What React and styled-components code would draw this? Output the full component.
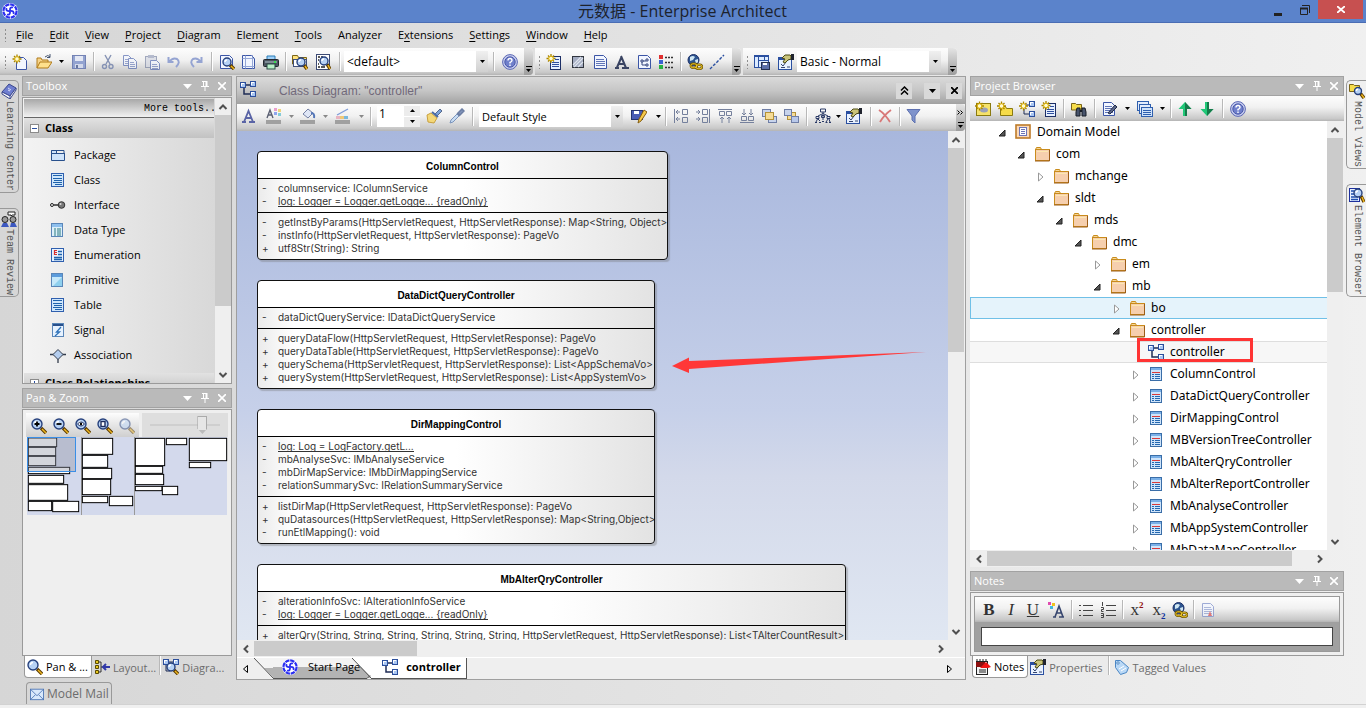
import React, { useState } from 'react';
import styled, { createGlobalStyle, css } from 'styled-components';

const ui = "'Open Sans', 'Noto Sans', 'Noto Sans CJK SC', sans-serif";
const wide = "'Noto Sans', 'Open Sans', 'Noto Sans CJK SC', sans-serif";
const mono = "'Liberation Mono', monospace";

const GlobalStyle = createGlobalStyle`
  * { box-sizing: border-box; }
  body { margin: 0; overflow: hidden; font-family: ${ui}; font-size: 11px; color: #000; }
  button, input, select, textarea { font: inherit; color: inherit; border: 0; padding: 0; margin: 0; background: none; border-radius: 0; }
  ul { list-style: none; margin: 0; padding: 0; }
  svg { display: block; flex: none; }
  h1, h2, p { margin: 0; font-weight: normal; }
`;

// shared bits of the drawings
const Box = ({ x, y }) => (
  <g>
    <rect x={x + 0.5} y={y + 0.5} width="5" height="5" fill="#a9c6f2" stroke="#2c4f9c" />
    <path d={`M${x + 1} ${y + 1}h3v1h-2v2h-1z`} fill="#fff" />
  </g>
);
const Lens = ({ x = 6, y = 6, r = 5, pale }) => (
  <g opacity={pale ? 0.5 : 1}>
    <path d={`M${x + r - 1} ${y + r - 1}L15 15`} stroke="#5b3b00" strokeWidth="3.4" />
    <path d={`M${x + r} ${y + r}L15 15`} stroke="#f0b820" strokeWidth="1.4" />
    <circle cx={x} cy={y} r={r} fill="#b7d2f5" stroke="#26407c" strokeWidth="1.4" />
    <path d={`M${x - r / 2} ${y}a${r / 2} ${r / 2} 0 0 1 ${r / 2} ${-r / 2}`} stroke="#fff" fill="none" strokeWidth="1.3" />
  </g>
);
const Spark = ({ x = 4.5, y = 4.5 }) => (
  <g>
    <path d={`M${x} ${y - 4.5}v9M${x - 4.5} ${y}h9M${x - 3} ${y - 3}l6 6M${x + 3} ${y - 3}l-6 6`} stroke="#a88400" strokeWidth="1.3" />
    <circle cx={x} cy={y} r="2.3" fill="#fffbd0" stroke="#dcb000" />
  </g>
);
const Sheet = ({ x = 2, y = 1, w = 11, h = 14, c = '#3c56a6', lines = true }) => (
  <g>
    <path d={`M${x + 0.5} ${y + 0.5}h${w - 4}l3 3v${h - 4}h-${w - 1}z`} fill="#f2f6ff" stroke={c} />
    {lines && <path d={`M${x + 2} ${y + 4.5}h${w - 5}M${x + 2} ${y + 6.5}h${w - 4}M${x + 2} ${y + 8.5}h${w - 4}M${x + 2} ${y + 10.5}h${w - 4}`} stroke={c} opacity=".8" />}
  </g>
);
const Swatch = () => (
  <g>
    <rect x="8" y="0" width="3" height="3" fill="#e9a0cc" />
    <rect x="12" y="1" width="3" height="3" fill="#ecd47c" />
    <rect x="8" y="4" width="3" height="3" fill="#8fa6ee" />
    <rect x="12" y="5" width="3" height="3" fill="#86ccd8" />
  </g>
);
const Globe = () => (
  <g>
    <circle cx="6.5" cy="6" r="5.5" fill="#2d5590" stroke="#1d2f66" />
    <path d="M3 3q3-2 5 0l-2 3-3 1zM8 6l3-1v3l-2 2z" fill="#cfe6f2" />
    <rect x="3.8" y="9.8" width="6" height="4" rx="2" fill="none" stroke="#6b5200" strokeWidth="2.4" />
    <rect x="9" y="10.8" width="6" height="4" rx="2" fill="none" stroke="#6b5200" strokeWidth="2.4" />
    <rect x="3.8" y="9.8" width="6" height="4" rx="2" fill="none" stroke="#f2cc2c" />
    <rect x="9" y="10.8" width="6" height="4" rx="2" fill="none" stroke="#f2cc2c" />
  </g>
);
const Hand = () => (
  <g>
    <rect x=".5" y="3.5" width="13" height="12" fill="#e9f2ff" stroke="#2a4fa0" />
    <path d="M1 5h12" stroke="#2a4fa0" strokeWidth="2" />
    <path d="M3 10l2 2 3-4M9 13h3M3 13.500h4" stroke="#34446e" fill="none" />
    <path d="M4 4l3-3h5l1 1v3l-3 1-3 3-2-1 2-3z" fill="#c9c47a" stroke="#4d4a14" />
    <path d="M13 0h3v6h-3z" fill="#20242e" />
  </g>
);
const Notepad = ({ c = '#2f5fae', red }) => (
  <g>
    <rect x="2.5" y="1.5" width="11" height="13" fill="#cfe4fa" stroke={c} />
    <path d="M3 3h10" stroke="#7ab0e8" strokeWidth="2" />
    <path d="M4 6.500h8" stroke={red ? '#d83a3a' : '#2468b0'} />
    <path d="M4 8.500h2M7 8.500h5M4 10.500h2M7 10.500h5M4 12.500h2M7 12.500h5" stroke="#2468b0" />
  </g>
);

const icons = {
  logo: (
    <g>
      <circle cx="8" cy="8" r="8" fill="#fff" />
      <circle cx="8" cy="8" r="6.600" fill="none" stroke="#2a2ef0" strokeWidth="2.200" strokeDasharray="4.400 .780" />
      <path d="M8 8Q7.500 3.500 11 4.500M8 8Q12.500 7.500 11.500 11M8 8Q8.500 12.500 5 11.500M8 8Q3.500 8.500 4.500 5" fill="none" stroke="#2a2ef0" strokeWidth="1.800" />
    </g>
  ),
  new: <g><Sheet x={4} y={3} w={11} h={13} lines={false} /><Spark x={5} y={5} /></g>,
  open: (
    <g>
      <path d="M1 14V4h4l1 2h6v2" fill="#f7d48a" stroke="#b07a18" />
      <path d="M1 14l3-6h12l-4 6z" fill="#ffe08c" stroke="#b07a18" />
      <path d="M9 3q3-3 5 0M14 0v3.500h-3" fill="none" stroke="#42526e" />
    </g>
  ),
  save: (
    <g>
      <rect x="1.5" y="1.5" width="13" height="13" fill="#93a3d0" stroke="#7382b4" />
      <rect x="4" y="2" width="8" height="5" fill="#e4e8f4" /><rect x="4" y="10" width="8" height="4" fill="#d2d8ea" />
      <rect x="5" y="11" width="2" height="3" fill="#66769f" />
    </g>
  ),
  cut: (
    <g stroke="#8592b4" fill="none" strokeWidth="1.4">
      <path d="M5 1l5 9M11 1l-5 9" /><circle cx="4.500" cy="12.500" r="2" /><circle cx="11" cy="12.500" r="2" />
    </g>
  ),
  copy: <g opacity=".6"><Sheet x={1} y={1} w={9} h={11} /><Sheet x={6} y={4} w={9} h={11} /></g>,
  paste: (
    <g opacity=".6">
      <rect x="1.5" y="2.5" width="11" height="11" fill="#d0d4e0" stroke="#6a7698" /><rect x="4" y="1" width="6" height="3" fill="#8b95b4" />
      <Sheet x={6} y={6} w={10} h={10} />
    </g>
  ),
  undo: <path d="M2.500 3v5h5M3 8q4-5 8-3q4 3-1 8" fill="none" stroke="#95a4d2" strokeWidth="2" />,
  redo: <path d="M13.500 3v5h-5M13 8q-4-5-8-3q-4 3 1 8" fill="none" stroke="#95a4d2" strokeWidth="2" />,
  preview: <g><Sheet lines={false} x={1} w={13} /><Lens x={8} y={8} r={4} /></g>,
  page: <g><Sheet lines={false} x={1} w={13} /><path d="M4.500 1v14M11.500 1v14M1 4.500h13M1 12.500h13" stroke="#6f86c6" opacity=".7" /></g>,
  print: (
    <g>
      <path d="M4 6V2h8v4" fill="#9fd0f8" stroke="#2b7db6" />
      <rect x=".5" y="5.500" width="15" height="7" rx="1" fill="#4c5560" stroke="#23282e" /><path d="M2 8h12" stroke="#8fa0a8" strokeWidth="1.500" /><path d="M11 8h2" stroke="#38e050" strokeWidth="2" />
      <rect x="4" y="10" width="8" height="5" fill="#b8f0c8" stroke="#2b4d46" />
    </g>
  ),
  findPkg: <g><path d="M.5 10V1.500h5l1 2h8V10z" fill="#ffe27a" stroke="#7a6418" /><rect x="1.500" y="5.500" width="13" height="7" fill="#fff" stroke="#41507a" /><Lens x={9} y={8} r={4} /></g>,
  findDoc: <g><rect x="1.500" y=".5" width="13" height="15" fill="#fff" stroke="#3c4a74" /><path d="M3 3h2M6 3h2M3 6h1M3 10h1M3 13h2M6 13h4" stroke="#222" strokeWidth="1.500" /><Lens x={9} y={7} r={4} /></g>,
  help: (
    <g>
      <circle cx="8" cy="8" r="7.400" fill="#c6cdf0" stroke="#5c68b4" /><circle cx="8" cy="8" r="5.200" fill="#7080cc" stroke="#4a58a8" />
      <path d="M6 6.500q0-2 2-2t2 2q0 1-2 2v1M8 10.500v1.500" fill="none" stroke="#fff" strokeWidth="1.400" />
    </g>
  ),
  newEl: <g><rect x="4.500" y="2.500" width="10" height="13" fill="#e6f0ff" stroke="#1d2f66" /><path d="M9 5.500h4M6 8.500h7M6 10.500h7M6 12.500h7" stroke="#2f4f9e" strokeWidth="1.200" /><Spark x={5} y={4.500} /></g>,
  shade: <g><rect x="2.500" y="2.500" width="11" height="11" fill="#a3abc0" stroke="#31363f" /><path d="M3 11l8-8M4 13l9-9M8 13l5-5" stroke="#dfe5ee" strokeWidth="1.200" /></g>,
  doc: <Sheet x={2} w={13} />,
  letter: <path d="M1 14h4M8 14h7M3 13.500L7.500 3 M7 2l5 12M5 10h5" fill="none" stroke="#3a4462" strokeWidth="2" />,
  docNodes: <g><Sheet x={2} w={13} lines={false} /><path d="M5 6h2v2h-2zM10 5h2v2h-2zM10 10h2v2h-2zM7 7h3M6 8v3h4" fill="none" stroke="#3a4a80" /></g>,
  legend: (
    <g>
      <path d="M7 3.500h8M7 8.500h8M7 13.500h8" stroke="#333" strokeDasharray="2 1" strokeWidth="1.500" />
      <rect x="1" y="1" width="4" height="4" fill="#e03030" /><rect x="1" y="6" width="4" height="4" fill="#3a62d0" /><rect x="1" y="11" width="4" height="4" fill="#28b040" />
    </g>
  ),
  globe: <Globe />,
  dash: <path d="M1 15L15 1" stroke="#2a4fa0" strokeDasharray="3 1.500" strokeWidth="1.400" />,
  layoutSave: (
    <g>
      <rect x=".5" y="1.500" width="14" height="12" fill="#dcebff" stroke="#2a4fa0" /><path d="M0 2.500h15M4.500 3v10M10.500 3v4M4 6.500h11" stroke="#2a4fa0" />
      <rect x="7.500" y="8.500" width="8" height="7" fill="#5c70a8" stroke="#25304e" /><rect x="9" y="9" width="4" height="2" fill="#fff" />
    </g>
  ),
  props: <Hand />,
  nodes: <g><path d="M6 4h5M4 6v7h6" stroke="#1f2c55" strokeWidth="1.500" fill="none" /><Box x={0} y={1} /><Box x={10} y={0} /><Box x={10} y={10} /></g>,
  fontA: <path d="M1 14h4M8 14h6M3 14L7.500 3l4.500 11M4.500 10h6" fill="none" stroke="#5a64a6" strokeWidth="1.800" />,
  fontColor: <g><path d="M1 10l3-8 3 8M2 7h4" fill="none" stroke="#5a5f72" strokeWidth="1.400" /><Swatch /><rect x="0" y="12" width="15" height="4" fill="#a0a0a0" /></g>,
  fill: <g><path d="M3 6l5-5 5 4-5 5z" fill="#dfe6f6" stroke="#7480a4" /><path d="M11 5q4 0 3 5" fill="none" stroke="#5577b8" strokeWidth="2" /><rect x="0" y="12" width="15" height="4" fill="#a0a0a0" /></g>,
  lineColor: <g><path d="M2 7L13 1" stroke="#7f9cd8" strokeWidth="1.400" /><rect x="1" y="8" width="4" height="3" fill="#e8b4c0" /><rect x="5" y="8" width="4" height="3" fill="#f0c878" /><rect x="9" y="8" width="4" height="3" fill="#7ab8dc" /><rect x="0" y="12" width="15" height="4" fill="#a0a0a0" /></g>,
  brush: <g><path d="M9 6l5-5 2 2-5 5z" fill="#7ba2d8" stroke="#55688c" /><path d="M1 7l4-2 6 5-3 5-6-1z" fill="#f4d878" stroke="#c8a040" /><path d="M6 4l6 5" stroke="#4b6ca6" strokeWidth="2" /></g>,
  dropper: <g><path d="M1 15l1-3 6-6 2 2-6 6z" fill="#c8dcf2" stroke="#7a94bc" /><path d="M8 5l3 3M9 5l4-4 2 2-4 4z" fill="#8194ba" stroke="#6b7da2" strokeWidth="1.500" /></g>,
  savePen: <g><rect x=".5" y="2.500" width="11" height="9" fill="#4a5cb4" stroke="#27346e" /><rect x="3" y="3" width="5" height="3" fill="#fff" /><path d="M7 15l1-4 5-9 3 2-6 9z" fill="#f6c94a" stroke="#855d10" /></g>,
  alignL: <path d="M1.500 1v14M3 4h4M3 11h4M5 2l-2 2 2 2M5 9l-2 2 2 2M9.500 1.500h5v5h-5zM9.500 9.500h5v5h-5z" fill="none" stroke="#75809c" />,
  alignR: <path d="M14.500 1v14M1 4h4M1 11h4M3 2l2 2-2 2M3 9l2 2-2 2M7.500 1.500h5v5h-5zM7.500 9.500h5v5h-5z" fill="none" stroke="#75809c" />,
  alignT: <path d="M1 1.500h14M2.500 3.500h5v4h-5zM9.500 3.500h5v4h-5zM5 15V9M12 15V9M3 11l2-2 2 2M10 11l2-2 2 2" fill="none" stroke="#75809c" />,
  alignB: <path d="M1 14.500h14M2.500 8.500h5v4h-5zM9.500 8.500h5v4h-5zM5 1v6M12 1v6M3 5l2 2 2-2M10 5l2 2 2-2" fill="none" stroke="#75809c" />,
  front: <g><rect x="1.500" y="1.500" width="8" height="7" fill="#c8d4ec" stroke="#6f7ea6" /><rect x="7.500" y="8.500" width="8" height="6" fill="#c8d4ec" stroke="#6f7ea6" /><rect x="4.500" y="4.500" width="8" height="7" fill="#f6dc96" stroke="#b49238" /></g>,
  back: <g><rect x="4.500" y="4.500" width="8" height="7" fill="#f6dc96" stroke="#b49238" /><rect x="1.500" y="1.500" width="7" height="6" fill="#c8d4ec" stroke="#6f7ea6" /><rect x="8.500" y="8.500" width="7" height="6" fill="#b8c8ea" stroke="#6f7ea6" /></g>,
  tree: <path d="M5.500 1h5v3h-5zM8 4v8M8 5.500L3 8M8 5.500L13 8M1 8.500h3v2h-3zM6.500 7.500h3v2h-3zM12 8.500h3v2h-3zM2.500 11L1 14M3 11l2 2M13 11l-2 3M14 11l1 3M0 14.500h2M4 14.500h2M7 13.500h2M10.500 14.500h2M14 14.500h2" fill="none" stroke="#2b3a66" />,
  del: <path d="M2 2q6 4 11 12M14 2q-7 5-11 12" fill="none" stroke="#d87878" strokeWidth="1.800" />,
  filter: <path d="M1 1.500h13L9 8v7l-3-3V8z" fill="#7f93cc" stroke="#5d70b0" />,
  package: <g><path d="M1.500 13.500v-10h5v3h8v7z" fill="#cfe4fb" stroke="#28508c" /><path d="M1 6.500h14M1.500 3.500h12.500v3" fill="none" stroke="#28508c" /></g>,
  klass: <g><rect x="1.500" y="1.500" width="12" height="13" fill="#cfe6fb" stroke="#2f5fae" /><path d="M3 3.500h9M3 6.500h9M4 8.500h8M3 10.500h9M5 12.500h7" stroke="#1f62ac" /></g>,
  iface: <g><circle cx="2" cy="8" r="1.500" fill="none" stroke="#222" /><path d="M4 8h5" stroke="#222" strokeWidth="1.400" /><circle cx="11.500" cy="8" r="3.300" fill="#777" stroke="#333" /><circle cx="10.500" cy="7" r="1" fill="#ddd" /></g>,
  dataType: <g><rect x="1.500" y="1.500" width="11" height="13" fill="#ddf0fa" stroke="#5a86b8" /><rect x="2" y="2" width="10" height="3" fill="#8ec0ee" /><path d="M4 7h2M7 7h4M4 9h2M7 9h4M4 11h2M7 11h4M4 13h2M7 13h4" stroke="#2a7a80" /></g>,
  enumr: <g><rect x="1.500" y="1.500" width="12" height="13" fill="#e6f2ff" stroke="#2f5fae" /><path d="M4 3.500h3M4 5.500h3M4 7.500h3M4.500 3v5" stroke="#d83030" strokeWidth="1.200" /><path d="M8 4.500h4M8 7.500h4M4 10.500h8M4 12.500h8" stroke="#1f62ac" strokeWidth="1.300" /></g>,
  primitive: <g><rect x="1.500" y="1.500" width="11" height="13" fill="#c5e8fa" stroke="#5a86b8" /><rect x="2" y="2" width="10" height="3" fill="#5c9cdc" /><path d="M3 14l9-9v9z" fill="#8fd0ee" /></g>,
  signal: <g><rect x="2.500" y="1.500" width="11" height="13" fill="#e6f2ff" stroke="#5a86b8" /><rect x="3" y="2" width="10" height="2" fill="#28508c" /><path d="M11 5L6.500 10h3L5 14" fill="none" stroke="#2f72b8" strokeWidth="1.300" /></g>,
  assoc: <g><path d="M0 7.500h16M8 12v4" stroke="#333c4c" strokeWidth="1.300" /><path d="M8 2.500l5 5-5 5-5-5z" fill="#b4cdee" stroke="#333c4c" /></g>,
  zoomIn: <g><Lens /><path d="M3.500 6h5M6 3.500v5" stroke="#000" strokeWidth="1.800" /></g>,
  zoomOut: <g><Lens /><path d="M3.500 6h5" stroke="#000" strokeWidth="1.800" /></g>,
  zoomFit: <g><Lens /><path d="M2.500 6q3.500-4 7 0q-3.500 4-7 0z" fill="#fff" stroke="#1c2c5c" /><circle cx="6" cy="6" r="1.200" fill="#000" /></g>,
  zoomPage: <g><Lens /><rect x="4" y="3.500" width="4" height="5" fill="#fff" stroke="#1c2c5c" strokeWidth="1.400" /></g>,
  zoomOff: <Lens pale />,
  lens: <Lens />,
  layout: <g><path d="M5 3h2v10H5M7 8h2" stroke="#333" fill="none" /><path d="M1.500 1.500h3v3h-3zM1.500 6.500h3v3h-3zM1.500 11.500h3v3h-3z" fill="#e8c820" stroke="#5b4b00" /><path d="M16 8H9M12 5L9 8l3 3" fill="none" stroke="#3038a8" strokeWidth="2" /></g>,
  diagLens: <g><Box x={0} y={0} /><Box x={10} y={0} /><path d="M6 3h4M3 6v6h4" stroke="#1f2c55" fill="none" /><Lens x={8} y={8} r={4} /></g>,
  mail: <g><rect x=".5" y="2.500" width="15" height="12" fill="#d8e8fb" stroke="#4a74b4" /><path d="M1 3l7 7 7-7M1 14l5-5M15 14l-5-5" fill="none" stroke="#4a74b4" /></g>,
  newModel: <g><rect x="1.500" y="2.500" width="14" height="12" fill="#f6e26a" stroke="#8a7a10" /><ellipse cx="9" cy="9" rx="4" ry="2.500" fill="#9aa0b8" /><Spark x={4.500} y={5} /></g>,
  newPkg: <g><path d="M3.500 14.500v-9h5l1 2h6v7z" fill="#f6dc4a" stroke="#8a7a10" /><Spark x={4.500} y={5} /></g>,
  newDiag: <g><path d="M7 4h4M5 8v5h6" stroke="#1f2c55" fill="none" /><Box x={10} y={0} /><Box x={10} y={10} /><Spark x={4.500} y={5} /></g>,
  find: <g><path d="M.5 9V2.500h4l1 1h5V9z" fill="#f6dc4a" stroke="#7a6418" /><path d="M5 15v-4l1-4h3v8zM11 15V7h3l1 4v4z" fill="#48546c" stroke="#171c26" /><path d="M9 10h2" stroke="#171c26" strokeWidth="2" /></g>,
  edit: <g><Sheet x={1} w={12} /><path d="M6 12l7-8 2 2-7 7z" fill="#59658c" stroke="#222b44" /></g>,
  stack: <g><rect x=".5" y=".5" width="11" height="9" fill="#e2ecfc" stroke="#2f5fae" /><rect x="2.500" y="3.500" width="11" height="9" fill="#e2ecfc" stroke="#2f5fae" /><rect x="4.500" y="6.500" width="11" height="9" fill="#cfe2fa" stroke="#2f5fae" /><path d="M6 9.500h8M6 11.500h8M6 13.500h8" stroke="#2f5fae" /></g>,
  up: <g><path d="M8 1L1.500 8H6v7h4V8h4.500z" fill="#20c878" /><path d="M8 1l6.500 7H10v7H8z" fill="#167a4a" /></g>,
  down: <g><path d="M8 15L1.500 8H6V1h4v7h4.500z" fill="#20c878" /><path d="M8 15l6.500-7H10V1H8z" fill="#167a4a" /></g>,
  folder: <g><path d="M1.500 13.500v-10l1-2h4l1 2" fill="#f6d698" stroke="#c98c1c" /><rect x="1.500" y="3.500" width="14" height="11" fill="#f6cfae" stroke="#c98c1c" /><path d="M1 15h14.500V4" fill="none" stroke="#9c5c18" /><path d="M3 5.500h11" stroke="#fde8b0" /></g>,
  model: <g><rect x="1" y="1" width="14" height="13" fill="#fbd9b8" stroke="#bd7a28" strokeWidth="1.600" /><rect x="4.500" y="3.500" width="7" height="8" fill="#fff" stroke="#6d74b4" /><path d="M6 5.500h4M6 7.500h4M6 9.500h4" stroke="#6d74b4" /></g>,
  clsRed: <Notepad c="#3a6ea8" red />,
  noteTab: <g><rect x="1.500" y="2.500" width="11" height="13" fill="#f2f2f2" stroke="#222" /><path d="M2 2v-2M5 2v-2M8 2v-2M11 2v-2M4 11h7M4 13h7" stroke="#222" /><path d="M1 3h9v5H1z" fill="#8e1010" /><path d="M5 9l6-6 5 5-3 1z" fill="#f01414" /></g>,
  tag: <g><path d="M1.500 1.500h5l8 7-2 5-6 2-5-7z" fill="#b9d8f6" stroke="#4a86c4" /><circle cx="4" cy="4" r="1.200" fill="#fff" stroke="#4a86c4" /><path d="M5 10l5-3M7 12l5-3" stroke="#fff" /></g>,
  book: <g><path d="M1 9L8 1l7 4-6 8z" fill="#6f7ed0" stroke="#3a478e" /><path d="M1 9l8 4v3L1 11zM9 13l6-8v2l-6 9" fill="#fff" stroke="#3a478e" /><path d="M7 5l3 2M7 7l2 1" stroke="#d8def8" /></g>,
  team: <g><circle cx="4" cy="8.500" r="3" fill="#999" stroke="#222" /><circle cx="12" cy="8.500" r="3" fill="#999" stroke="#222" /><path d="M0 16l2-4h4l2 4zM9 16l1-4h4l2 4z" fill="#3c58c0" /><path d="M7 1h7v3h-3l-1 1V4H7z" fill="#fff" stroke="#222" /></g>,
  views: <g><path d="M.5 8.500v-7h4l1 1h5v6z" fill="#f6dc4a" stroke="#7a6418" /><Lens x={9} y={8} r={3.500} /></g>,
  elBrowser: <g><rect x=".5" y="1.500" width="10" height="13" fill="#e6f0ff" stroke="#1d2f9c" /><path d="M2 4h3M2 7h3M2 10h7M2 12.500h7" stroke="#1f4fae" strokeWidth="1.400" /><Lens x={9} y={6} r={4} /></g>,
  bullets: <path d="M1 3.500h2M1 8.500h2M1 13.500h2M5 3.500h10M5 8.500h10M5 13.500h10" stroke="#444" strokeWidth="1.200" />,
  numbers: <path d="M2.500 0v4M1 5.500h2.500v2h-2v2h2M1 11.500h2.500v4h-2.500M1 13.500h2M6 3.500h10M6 8.500h10M6 13.500h10" stroke="#444" fill="none" />,
  linkColor: <g><rect x="0" y="0" width="3" height="3" fill="#e04bb0" /><rect x="4" y="1" width="3" height="3" fill="#f2c21e" /><rect x="2" y="4" width="3" height="3" fill="#42b8dc" /><path d="M5 15h3M11 15h5M7 15l4-11 4 11M8 11h5" fill="none" stroke="#36456e" strokeWidth="1.600" /></g>,
  docRed: <g opacity=".7"><Sheet x={2} w={12} c="#7a8cc8" /><path d="M8 14l2-5 2 5z" fill="#e05050" /></g>,
};

const Icon = ({ name, size = 16 }) => <svg width={size} height={size} viewBox="0 0 16 16" aria-hidden="true">{icons[name]}</svg>;
const Caret = ({ c = '#000', small }) => <svg width={small ? 5 : 7} height={small ? 3 : 4} viewBox="0 0 7 4"><path d="M0 0h7L3.500 4z" fill={c} /></svg>;
const Chevron = ({ turn = 0 }) => (
  <svg width="10" height="10" viewBox="0 0 10 10"><path d="M1.500 7L5 3.500 8.500 7" transform={`rotate(${turn} 5 5)`} fill="none" stroke="#505050" strokeWidth="2" /></svg>
);

const App_ = styled.div`
  height: 100vh;
  display: flex;
  flex-direction: column;
  background: linear-gradient(to right, #d6d6d6, #f0f0f0);
`;
const TitleBar = styled.header`
  height: 23px;
  flex: none;
  display: grid;
  grid-template-columns: 1fr auto 1fr;
  background: #5b83cb;
  border-bottom: 1px solid #4a6db4;
  padding: 0 3px 0 2px;
  h1 { font-size: 16px; line-height: 22px; color: #1c222c; }
`;
const AppMark = styled.div`padding-top: 3px;`;
const WindowButtons = styled.div`
  display: flex;
  justify-content: flex-end;
`;
const WinButton = styled.button`
  width: ${p => (p.$close ? 45 : 27)}px;
  height: 19px;
  display: grid;
  place-items: center;
  background: ${p => (p.$close ? '#c75050' : 'transparent')};
`;
const Grip = styled.span`
  width: 3px;
  height: 14px;
  flex: none;
  background: radial-gradient(circle, #8e8e8e 1px, transparent 1px) 0 0 / 3px 4px;
`;
const MenuBar = styled.nav`
  height: 25px;
  flex: none;
  display: flex;
  align-items: center;
  gap: 2px;
  padding: 0 0 2px 4px;
  button { padding: 0 7px; line-height: 20px; }
  u { text-underline-offset: 2px; }
`;
const Toolbars = styled.div`
  display: flex;
  gap: 2px;
  height: 28px;
  flex: none;
`;
const silver = 'linear-gradient(#fdfdfd, #f1f1f1 45%, #c9c9c9 90%, #b4b4b4)';
const ToolBar = styled.div`
  display: flex;
  align-items: center;
  height: 27px;
  flex: none;
  padding-left: ${p => p.$pad || 0}px;
  background: ${silver};
  border-radius: 0 4px 4px 0;
`;
const DiagramTools = styled(ToolBar)`
  > *:not(:last-child) { margin-bottom: 3px; }
`;
const ToolButton = styled.button`
  width: ${p => p.$w || 22}px;
  height: 22px;
  flex: none;
  display: grid;
  place-items: center;
`;
const Sep = styled.span`
  width: 1px;
  height: 19px;
  flex: none;
  margin: 0 ${p => p.$m || 3}px;
  background: #b8b8b8;
  box-shadow: 1px 0 #fff;
`;
const Overflow = styled.button`
  align-self: stretch;
  width: 9px;
  flex: none;
  margin-left: ${p => (p.$gap ? `${p.$gap}px` : 'auto')};
  display: flex;
  flex-direction: column;
  align-items: center;
  justify-content: flex-end;
  gap: 2px;
  padding-bottom: 3px;
  background: linear-gradient(#e4e4e4, #9d9d9d);
  border-radius: 0 4px 4px 0;
  svg:first-child:not(:last-child) { margin-bottom: 5px; }
  i { width: 6px; height: 1px; background: #000; }
`;
const PickWrap = styled.span`
  position: relative;
  display: inline-flex;
  flex: none;
  width: 144px;
  height: 21px;
  background: #fff;
  select { appearance: none; width: 100%; padding-left: 3px; outline: none; font-size: ${p => (p.$small ? 11 : 12)}px; }
  i {
    position: absolute;
    right: 0;
    top: 0;
    width: 12px;
    height: 100%;
    display: grid;
    place-items: center;
    background: linear-gradient(#f0f0f0, #d0d0d0);
    pointer-events: none;
  }
`;
const Spinner = styled.span`
  display: flex;
  height: 21px;
  width: 43px;
  flex: none;
  background: #fff;
  input { width: 27px; padding: 0 2px 5px; outline: none; font-size: 12px; }
  div { flex: 1; display: grid; gap: 1px; }
  button { background: #ececec; display: grid; place-items: center; }
`;

const Work = styled.main`
  flex: 1;
  min-height: 0;
  display: flex;
  gap: 4px;
`;
const Rail = styled.aside`
  width: ${p => (p.$right ? 20 : 19)}px;
  flex: none;
  display: flex;
  flex-direction: column;
  gap: 15px;
  padding-top: 4px;
  ${p => (p.$right ? css`margin-left: -2px;` : css`margin-right: -1px;`)}
`;
const RailTab = styled.button`
  display: flex;
  flex-direction: column;
  align-items: center;
  gap: 2px;
  padding: 2px 0 1px;
  border: 1px solid #999;
  ${p => (p.$right
    ? css`border-right: 0; border-radius: 5px 0 0 5px;`
    : css`border-left: 0; border-radius: 0 5px 5px 0;`)}
  span { writing-mode: vertical-rl; font: 10px/14px ${mono}; color: #555; }
`;
const Side = styled.section`
  width: ${p => (p.$wide ? 374 : 210)}px;
  flex: none;
  min-height: 0;
  display: flex;
  flex-direction: column;
`;
const PanelHead = styled.header`
  height: 20px;
  flex: none;
  display: flex;
  align-items: center;
  padding: 0 1px 0 3px;
  background: #bababa;
  border: 1px solid #a2a2a2;
  h2 { flex: 1; color: #fff; font-size: 11px; line-height: 18px; }
  button { width: 17px; height: 16px; display: grid; place-items: center; }
`;
const Frame = styled.div`
  margin-top: 1px;
  min-height: 0;
  border: 1px solid #9a9a9a;
  background: #efefef;
  display: flex;
  flex: ${p => p.$flex || '1'};
  flex-direction: ${p => (p.$column ? 'column' : 'row')};
`;
const ToolboxBody = styled.div`
  flex: 1;
  min-width: 0;
  overflow: hidden;
  padding: 1px 1px 0;
  background: linear-gradient(to right, #f3f3f3, #d8d8d8);
`;
const MoreTools = styled.button`
  display: block;
  width: 100%;
  height: 19px;
  overflow: hidden;
  white-space: nowrap;
  padding-left: 120px;
  text-align: left;
  font: 10px/19px ${mono};
  background: linear-gradient(#a8a8a8, #f2f2f2);
  border-bottom: 1px solid #666;
`;
const GroupHead = styled.button`
  display: flex;
  align-items: center;
  gap: 6px;
  width: 100%;
  height: 20px;
  padding-left: 6px;
  font: bold 11px/20px ${ui};
  background: linear-gradient(#e2e2e2, #c2c2c2);
`;
const ToolList = styled.ul`
  padding: 4px 0 6px 26px;
  button { display: flex; align-items: center; gap: 8px; height: 25px; font: 11px/25px ${ui}; }
`;
const VBar = styled.div`
  width: 16px;
  flex: none;
  display: flex;
  flex-direction: column;
  background: #efefef;
  button { height: 17px; flex: none; display: grid; place-items: center; }
  div { flex: 1; }
  div::before { content: ''; display: block; height: ${p => p.$thumb}; background: #cbcbcb; }
`;
const HBar = styled.div`
  height: 17px;
  flex: none;
  display: flex;
  margin-right: 16px;
  background: #efefef;
  button { width: 17px; flex: none; display: grid; place-items: center; }
  div { flex: 1; padding: 1px 0; }
  div::before { content: ''; display: block; height: 100%; width: ${p => p.$thumb}; background: #cbcbcb; }
`;
const ZoomRow = styled.div`
  display: flex;
  align-items: flex-end;
  gap: 3px;
  margin: 3px 3px 0;
  height: 24px;
  > div { display: flex; width: 113px; height: 24px; padding: 2px 0 0 2px; background: linear-gradient(#fdfdfd, #cfcfcf); }
  > label { flex: 1; display: flex; align-items: center; height: 24px; padding: 0 8px; background: #dedede; }
  input { appearance: none; width: 100%; height: 20px; margin: 0; background: linear-gradient(#cfcfcf, #cfcfcf) center / 100% 2px no-repeat; }
  input::-webkit-slider-thumb {
    appearance: none;
    width: 10px;
    height: 18px;
    background: linear-gradient(to right, #aaa 1px, #e6e6e6 1px, #e6e6e6 9px, #aaa 9px);
    border-top: 1px solid #aaa;
    border-bottom: 4px solid #bbb;
    clip-path: polygon(0 0, 100% 0, 100% 70%, 50% 100%, 0 70%);
  }
`;
const MiniMap = styled.svg`margin: 0 4px;`;
const Tabs = styled.div`
  height: 23px;
  flex: none;
  display: flex;
  align-items: flex-start;
  padding: 0 2px;
`;
const Tab = styled.button`
  display: flex;
  align-items: center;
  gap: 3px;
  height: 22px;
  padding: 0 2px;
  white-space: nowrap;
  color: #6c6c6c;
  ${p => p.$on && css`
    color: #000;
    background: #fff;
    border: 1px solid #999;
    border-top: 0;
    border-radius: 0 0 4px 4px;
    padding: 0 3px 0 2px;
  `}
`;
const MailTab = styled.button`
  align-self: flex-start;
  display: flex;
  align-items: center;
  gap: 3px;
  height: 22px;
  margin: 3px 0 0 4px;
  padding: 0 2px 0 3px;
  color: #6c6c6c;
  font-size: 12px;
  border: 1px solid #999;
  border-bottom: 0;
  border-radius: 4px 4px 0 0;
`;
const Center = styled.section`
  flex: 1;
  min-width: 0;
  display: flex;
  flex-direction: column;
  margin-bottom: 24px;
  border: 1px solid #9f9f9f;
  background: #efefef;
`;
const DocHead = styled.header`
  height: 27px;
  flex: none;
  display: flex;
  align-items: center;
  padding: 0 3px;
  background: linear-gradient(#dadada, #c6c6c6 50%, #a2a2a2);
  h2 { flex: 1; margin-left: 23px; font: 12px/20px 'Liberation Sans', sans-serif; color: #71697a; }
  button { width: 16px; height: 16px; margin-left: 6px; display: grid; place-items: center; background: #d9d9d9; }
  button:first-of-type { margin-right: 6px; }
  > svg { align-self: flex-start; margin-top: 4px; }
`;
const CanvasRow = styled.div`
  flex: 1;
  min-height: 0;
  display: flex;
  padding-right: 1px;
`;
const Canvas = styled.div`
  position: relative;
  flex: 1;
  min-width: 0;
  overflow: hidden;
  display: flex;
  flex-direction: column;
  align-items: flex-start;
  gap: 20px;
  padding: 20px;
  background: linear-gradient(#a8b7dd, #c6d0e9 55%, #d3d9ea 68%, #e0e7f2);
`;
const ClassBox = styled.article`
  width: ${p => p.$w}px;
  flex: none;
  border: 1px solid #111;
  border-radius: 4px;
  overflow: hidden;
  background: linear-gradient(to right, #fff 50%, #e3e3e3);
  box-shadow: 2px 2px 1px rgba(110, 110, 110, .35);
  color: #333;
  font: 10px/13px Inter, 'Liberation Sans', sans-serif;
  h2 { font: bold 10px/30px 'Liberation Sans', Arial, sans-serif; height: 26px; text-align: center; color: #000; }
  ul { border-top: 1px solid #000; padding: 3px 0 4px 4px; background: linear-gradient(to right, rgba(205, 205, 205, .4), transparent 36px); }
  li { display: grid; grid-template-columns: 16px 1fr; white-space: nowrap; }
`;
const Member = styled.span`
  justify-self: start;
  height: 12px;
  ${p => p.$static && css`border-bottom: 1px solid #333;`}
`;
const Arrow = styled.svg`
  position: absolute;
  left: 434px;
  top: 217px;
`;
const DocTabs = styled.div`
  height: 22px;
  flex: none;
  display: flex;
  border-top: 1px solid #fff;
  > button { display: grid; place-items: center; width: 17px; }
  > button:last-child { margin-left: auto; width: 32px; }
`;
const StartTab = styled.div`
  display: flex;
  align-items: flex-start;
  gap: 10px;
  margin: 0 -8px 0 -1px;
  padding: 1px 0 0 9px;
  background: linear-gradient(#f3f3f3 45%, #b3b3b3 45%);
  border-bottom: 1px solid #555;
  button { position: relative; z-index: 1; line-height: 16px; }
`;
const ControllerTab = styled.button`
  && { display: flex; align-items: center; width: auto; gap: 8px; padding: 0 5px 3px 11px; margin-left: -1px; }
  font: bold 11px/16px ${ui};
  background: #fff;
  border-right: 1px solid #555;
  border-bottom: 1px solid #555;
`;
const TreeRow = styled.li`
  position: relative;
  display: flex;
  align-items: center;
  height: 22px;
  padding-left: ${p => 28 + p.$level * 19}px;
  font: 12px/20px ${wide};
  white-space: nowrap;
  border: 1px solid transparent;
  border-width: 1px 0 1px 0;
  ${p => p.$state === 'hot' && css`background: #e5f3fb; border: 1px solid #70c0e7; border-right: 0; padding-left: ${27 + p.$level * 19}px;`}
  ${p => p.$state === 'cold' && css`background: #f7f7f7; border-color: #dedede;`}
  > i { width: 10px; margin-right: 7px; padding-top: 2px; }
  > svg { margin-right: 6px; }
`;
const RedMark = styled.span`
  position: absolute;
  left: 167px;
  top: -4px;
  width: 116px;
  height: 24px;
  border: 3px solid #ff3434;
`;
const TreeWrap = styled.div`
  flex: 1;
  min-height: 0;
  display: flex;
  padding-right: 1px;
  ul { flex: 1; overflow: hidden; background: #fff; }
`;
const BrowserTools = styled(ToolBar)`
  height: 25px;
  border-radius: 0;
  padding-left: ${p => p.$pad}px;
`;
const NoteBody = styled.div`
  flex: 1;
  display: flex;
  flex-direction: column;
  margin: 3px;
  border: 1px solid #999;
  background: #a0a0a0;
`;
const NoteInput = styled.textarea`
  height: 19px;
  margin: 5px 6px;
  resize: none;
  background: #fff;
  border: 1px solid #444;
  outline: none;
`;
const Spacer = styled.div`
  height: ${p => p.$h}px;
  flex: none;
`;
const Glyph = styled.span`
  font: 17px/20px 'Liberation Serif', serif;
  color: #333;
  font-weight: ${p => (p.$bold ? 'bold' : 'normal')};
  font-style: ${p => (p.$italic ? 'italic' : 'normal')};
  text-decoration: ${p => (p.$under ? 'underline' : 'none')};
  sup, sub { font-size: 9px; font-weight: bold; line-height: 0; color: ${p => p.$tint}; }
`;
const StatusLine = styled.footer`
  height: 4px;
  flex: none;
  background: #f0f0f0;
  border-top: 1px solid #d2d2d2;
`;

const menus = [['', 'F', 'ile'], ['', 'E', 'dit'], ['', 'V', 'iew'], ['', 'P', 'roject'], ['', 'D', 'iagram'], ['Ele', 'm', 'ent'], ['', 'T', 'ools'], ['Analyzer', '', ''], ['E', 'x', 'tensions'], ['', 'S', 'ettings'], ['', 'W', 'indow'], ['', 'H', 'elp']];

const tools = [['package', 'Package'], ['klass', 'Class'], ['iface', 'Interface'], ['dataType', 'Data Type'], ['enumr', 'Enumeration'], ['primitive', 'Primitive'], ['klass', 'Table'], ['signal', 'Signal'], ['assoc', 'Association']];

const classes = [
  {
    name: 'ColumnControl', w: 411,
    attrs: [['-', 'columnservice: IColumnService'], ['-', 'log: Logger = Logger.getLogge... {readOnly}', true]],
    ops: [['-', 'getInstByParams(HttpServletRequest, HttpServletResponse): Map<String, Object>'], ['-', 'instInfo(HttpServletRequest, HttpServletResponse): PageVo'], ['+', 'utf8Str(String): String']],
  },
  {
    name: 'DataDictQueryController', w: 398,
    attrs: [['-', 'dataDictQueryService: IDataDictQueryService']],
    ops: [['+', 'queryDataFlow(HttpServletRequest, HttpServletResponse): PageVo'], ['+', 'queryDataTable(HttpServletRequest, HttpServletResponse): PageVo'], ['+', 'querySchema(HttpServletRequest, HttpServletResponse): List<AppSchemaVo>'], ['+', 'querySystem(HttpServletRequest, HttpServletResponse): List<AppSystemVo>']],
  },
  {
    name: 'DirMappingControl', w: 398,
    attrs: [['-', 'log: Log = LogFactory.getL...', true], ['-', 'mbAnalyseSvc: IMbAnalyseService'], ['-', 'mbDirMapService: IMbDirMappingService'], ['-', 'relationSummarySvc: IRelationSummaryService']],
    ops: [['+', 'listDirMap(HttpServletRequest, HttpServletResponse): PageVo'], ['+', 'quDatasources(HttpServletRequest, HttpServletResponse): Map<String,Object>'], ['-', 'runEtlMapping(): void']],
  },
  {
    name: 'MbAlterQryController', w: 589,
    attrs: [['-', 'alterationInfoSvc: IAlterationInfoService'], ['-', 'log: Logger = Logger.getLogge... {readOnly}', true]],
    ops: [['+', 'alterQry(String, String, String, String, String, String, HttpServletRequest, HttpServletResponse): List<TAlterCountResult>']],
  },
];

const tree = [
  [0, 'open', 'model', 'Domain Model'], [1, 'open', 'folder', 'com'], [2, 'shut', 'folder', 'mchange'], [2, 'open', 'folder', 'sldt'],
  [3, 'open', 'folder', 'mds'], [4, 'open', 'folder', 'dmc'], [5, 'shut', 'folder', 'em'], [5, 'open', 'folder', 'mb'],
  [6, 'shut', 'folder', 'bo', 'hot'], [6, 'open', 'folder', 'controller'], [7, '', 'nodes', 'controller', 'cold'],
  ...['ColumnControl', 'DataDictQueryController', 'DirMappingControl', 'MBVersionTreeController', 'MbAlterQryController', 'MbAlterReportController', 'MbAnalyseController', 'MbAppSystemController', 'MbDataMapController'].map(n => [7, 'shut', 'clsRed', n]),
];

// x1, y1, x2, y2 of every element on the overview
const mini = [
  [85, 174, 170, 200], [85, 202, 167, 227], [85, 229, 167, 257], [85, 262, 209, 281], [85, 286, 191, 310], [85, 314, 203, 361], [85, 364, 155, 392], [158, 364, 236, 395],
  [247, 175, 338, 223], [247, 226, 323, 262], [247, 265, 335, 296], [247, 298, 332, 344], [247, 349, 323, 368], [328, 349, 398, 377],
  [406, 175, 494, 257], [406, 259, 488, 280], [406, 283, 491, 314], [406, 319, 486, 332], [487, 319, 533, 344], [499, 175, 560, 194], [568, 175, 680, 242], [568, 247, 632, 263],
];

function Tool({ icon, w }) {
  return <ToolButton $w={w} aria-label={icon}><Icon name={icon} /></ToolButton>;
}

function DropArrow({ w = 12, grey }) {
  return <ToolButton $w={w} aria-label="More"><Caret small c={grey ? '#888' : '#000'} /></ToolButton>;
}

function More({ gap, arrows }) {
  return (
    <Overflow $gap={gap} aria-label="More buttons">
      {arrows && <svg width="7" height="5" fill="none" stroke="#000"><path d="M.5 .5l2 2-2 2M3.500 .5l2 2-2 2" /></svg>}
      <i />
      <Caret small />
    </Overflow>
  );
}

function Pick({ label, value, small }) {
  return (
    <PickWrap $small={small}>
      <select aria-label={label} defaultValue={value}><option>{value}</option></select>
      <i><Caret small /></i>
    </PickWrap>
  );
}

function Head({ title }) {
  return (
    <PanelHead>
      <h2>{title}</h2>
      <button aria-label="Menu"><svg width="9" height="5"><path d="M0 0h9L4.500 5z" fill="#fff" /></svg></button>
      <button aria-label="Pin"><svg width="8" height="10" fill="none" stroke="#fff"><path d="M2.500 0v5.500M1 .5h5M0 5.500h8M4 6v4" /><path d="M5.500 0v5" strokeWidth="2" /></svg></button>
      <button aria-label="Close"><svg width="8" height="8" stroke="#fff" strokeWidth="1.600"><path d="M0 0l8 8M8 0L0 8" /></svg></button>
    </PanelHead>
  );
}

function VScroll({ thumb }) {
  return <VBar $thumb={thumb}><button aria-label="Up"><Chevron /></button><div /><button aria-label="Down"><Chevron turn={180} /></button></VBar>;
}

function HScroll({ thumb }) {
  return <HBar $thumb={thumb}><button aria-label="Left"><Chevron turn={-90} /></button><div /><button aria-label="Right"><Chevron turn={90} /></button></HBar>;
}

function Uml({ data }) {
  return (
    <ClassBox $w={data.w}>
      <h2>{data.name}</h2>
      {[data.attrs, data.ops].map((rows, i) => (
        <ul key={i}>
          {rows.map(([sign, text, fixed]) => <li key={text}><span>{sign}</span><Member $static={fixed}>{text}</Member></li>)}
        </ul>
      ))}
    </ClassBox>
  );
}

function Slant({ first }) {
  return (
    <svg width="20" height="21" viewBox="0 0 20 21">
      <path d="M0 0h20v20z" fill={first ? '#f3f3f3' : '#fff'} />
      {first && <path d="M10 10h10v10z" fill="#b3b3b3" />}
      {!first && <path d="M0 9h9l11 11H0z" fill="#b3b3b3" />}
      <path d="M0 0l19.500 20.500" stroke="#555" />
      {!first && <path d="M0 20.500h15l3-3" fill="none" stroke="#555" />}
    </svg>
  );
}

function LeftDock() {
  const [zoom, setZoom] = useState(79);
  return (
    <Side>
      <Head title="Toolbox" />
      <Frame $flex="0 0 287px">
        <ToolboxBody>
          <MoreTools>More tools...</MoreTools>
          <GroupHead>
            <svg width="9" height="9"><rect x=".5" y=".5" width="8" height="8" fill="#fff" stroke="#8a8a8a" /><path d="M2 4.500h5" stroke="#2a4fa0" /></svg>
            Class
          </GroupHead>
          <ToolList>
            {tools.map(([icon, name]) => <li key={name}><button><Icon name={icon} />{name}</button></li>)}
          </ToolList>
          <GroupHead>
            <svg width="9" height="9"><rect x=".5" y=".5" width="8" height="8" fill="#fff" stroke="#8a8a8a" /><path d="M2 4.500h5M4.500 2v5" stroke="#2a4fa0" /></svg>
            Class Relationships
          </GroupHead>
        </ToolboxBody>
        <VScroll thumb="76%" />
      </Frame>
      <Spacer $h={4} />
      <Head title="Pan & Zoom" />
      <Frame $column>
        <ZoomRow>
          <div>{['zoomIn', 'zoomOut', 'zoomFit', 'zoomPage', 'zoomOff'].map(n => <Tool key={n} icon={n} />)}</div>
          <label><input type="range" aria-label="Zoom" value={zoom} onChange={e => setZoom(e.target.value)} /></label>
        </ZoomRow>
        <MiniMap width="202" height="78" viewBox="81 171 606 234">
          <rect x="81" y="171" width="600" height="234" fill="#d3d9ec" />
          <path d="M244.500 171v234M403.500 171v234" stroke="#999" strokeWidth="3" />
          {mini.map(([a, b, c, d]) => <rect key={`${a}-${b}`} x={a} y={b} width={c - a} height={d - b} fill="#fff" stroke="#000" strokeWidth="3" />)}
          <rect x="82.500" y="172.500" width="144" height="102" fill="rgba(140,145,160,.38)" stroke="#3a8ee6" strokeWidth="3" />
        </MiniMap>
      </Frame>
      <Tabs>
        <Tab $on><Icon name="lens" />Pan & ...</Tab>
        <Tab><Icon name="layout" />Layout...</Tab>
        <Sep $m={1} />
        <Tab><Icon name="diagLens" />Diagra...</Tab>
      </Tabs>
      <MailTab><Icon name="mail" size={14} />Model Mail</MailTab>
    </Side>
  );
}

function DiagramView() {
  return (
    <Center>
      <DocHead>
        <Icon name="nodes" />
        <h2>Class Diagram: "controller"</h2>
        <button aria-label="Collapse"><svg width="9" height="9" fill="none" stroke="#000" strokeWidth="1.500"><path d="M1 4.500l3.500-3.500L8 4.500M1 8.500l3.500-3.500L8 8.500" /></svg></button>
        <button aria-label="Windows"><Caret /></button>
        <button aria-label="Close"><svg width="7" height="7" stroke="#000" strokeWidth="1.800"><path d="M0 0l7 7M7 0L0 7" /></svg></button>
      </DocHead>
      <DiagramTools $pad={1}>
        <Tool icon="fontA" /><Tool icon="fontColor" w={28} /><DropArrow grey w={6} /><Tool icon="fill" w={28} /><DropArrow grey w={6} />
        <Tool icon="lineColor" w={30} /><DropArrow grey w={6} /><Sep $m={6} />
        <Spinner>
          <input aria-label="Line width" defaultValue="1" />
          <div><button aria-label="Increase"><svg width="5" height="3"><path d="M0 3h5L2.500 0z" /></svg></button><button aria-label="Decrease"><svg width="5" height="3"><path d="M0 0h5L2.500 3z" /></svg></button></div>
        </Spinner>
        <Tool icon="brush" w={28} /><Tool icon="dropper" w={18} /><Sep $m={6} />
        <Pick label="Style" value="Default Style" small />
        <Tool icon="savePen" w={32} /><DropArrow w={6} /><Sep $m={4} />
        {['alignL', 'alignR', 'alignT', 'alignB', 'front', 'back'].map(n => <Tool key={n} icon={n} />)}
        <Sep $m={4} /><Tool icon="tree" w={24} /><DropArrow w={6} /><Tool icon="props" w={26} /><Sep $m={3} />
        <Tool icon="del" /><Sep $m={3} /><Tool icon="filter" />
        <More arrows />
      </DiagramTools>
      <CanvasRow>
        <Canvas>
          {classes.map(c => <Uml key={c.name} data={c} />)}
          <Arrow width="260" height="26" viewBox="0 0 260 26"><path d="M1 18L18 9.500V13L255 4 18 21V25z" fill="#ff3838" /></Arrow>
        </Canvas>
        <VScroll thumb="43%" />
      </CanvasRow>
      <HScroll thumb="24%" />
      <DocTabs>
        <button aria-label="Previous tab"><svg width="5" height="8" fill="none" stroke="#000"><path d="M4.500 .5v7L.5 4z" /></svg></button>
        <Slant first />
        <StartTab><Icon name="logo" /><button>Start Page</button></StartTab>
        <Slant />
        <ControllerTab><Icon name="nodes" />controller</ControllerTab>
        <button aria-label="Next tab"><svg width="5" height="8" fill="none" stroke="#000"><path d="M.5 .5v7L4.500 4z" /></svg></button>
      </DocTabs>
    </Center>
  );
}

function RightDock() {
  return (
    <Side $wide>
      <Head title="Project Browser" />
      <BrowserTools $pad={2}>
        <Tool icon="newModel" /><Tool icon="newPkg" /><Tool icon="newDiag" /><Tool icon="newEl" /><Sep $m={3} />
        <Tool icon="find" w={24} /><Sep $m={3} /><Tool icon="edit" w={24} /><DropArrow w={10} /><Tool icon="stack" w={26} /><DropArrow w={9} />
        <Sep $m={3} /><Tool icon="up" /><Tool icon="down" /><Sep $m={4} /><Tool icon="help" />
      </BrowserTools>
      <TreeWrap>
        <ul>
          {tree.map(([level, arrow, icon, name, state], i) => (
            <TreeRow key={i} $level={level} $state={state}>
              <i>
                {arrow === 'open' && <svg width="8" height="8"><path d="M1 7h6V1z" fill="#555" stroke="#222" /></svg>}
                {arrow === 'shut' && <svg width="8" height="10"><path d="M2.500 1v8L7 5z" fill="#fff" stroke="#999" /></svg>}
              </i>
              <Icon name={icon} />
              {name}
              {state === 'cold' && <RedMark />}
            </TreeRow>
          ))}
        </ul>
        <VScroll thumb="39%" />
      </TreeWrap>
      <HScroll thumb="94%" />
      <Spacer $h={4} />
      <Head title="Notes" />
      <Frame $column $flex="0 0 auto">
        <NoteBody>
          <BrowserTools $pad={3}>
            <ToolButton aria-label="Bold"><Glyph $bold>B</Glyph></ToolButton>
            <ToolButton aria-label="Italic"><Glyph $italic>I</Glyph></ToolButton>
            <ToolButton aria-label="Underline"><Glyph $under>U</Glyph></ToolButton>
            <Tool icon="linkColor" w={24} /><Sep $m={3} /><Tool icon="bullets" /><Tool icon="numbers" /><Sep $m={3} />
            <ToolButton aria-label="Superscript"><Glyph $tint="#901010">x<sup>2</sup></Glyph></ToolButton>
            <ToolButton aria-label="Subscript"><Glyph $tint="#10309c">x<sub>2</sub></Glyph></ToolButton>
            <Tool icon="globe" w={20} /><Sep $m={3} /><Tool icon="docRed" />
          </BrowserTools>
          <NoteInput aria-label="Notes" />
        </NoteBody>
      </Frame>
      <Tabs>
        <Tab $on><Icon name="noteTab" />Notes</Tab>
        <Tab><Icon name="props" />Properties</Tab>
        <Sep />
        <Tab><Icon name="tag" />Tagged Values</Tab>
      </Tabs>
      <Spacer $h={25} />
    </Side>
  );
}

export default function App() {
  return (
    <App_>
      <GlobalStyle />
      <TitleBar>
        <AppMark><Icon name="logo" /></AppMark>
        <h1>元数据 - Enterprise Architect</h1>
        <WindowButtons>
          <WinButton aria-label="Minimize"><svg width="8" height="12"><path d="M0 10.500h8" stroke="#222" strokeWidth="3" /></svg></WinButton>
          <WinButton aria-label="Restore"><svg width="10" height="10" fill="none" stroke="#222"><path d="M.5 3.500h7v6h-7zM2 .5h7.500V8" /><path d="M0 3.500h8" strokeWidth="2" /></svg></WinButton>
          <WinButton $close aria-label="Close"><svg width="8" height="7" stroke="#fff" strokeWidth="1.800"><path d="M0 0l8 7M8 0L0 7" /></svg></WinButton>
        </WindowButtons>
      </TitleBar>
      <MenuBar>
        <Grip />
        {menus.map(([a, k, b]) => <button key={a + k + b}>{a}<u>{k}</u>{b}</button>)}
      </MenuBar>
      <Toolbars>
        <ToolBar $pad={4}>
          <Grip /><Tool icon="new" w={26} /><Tool icon="open" /><DropArrow w={13} /><Tool icon="save" /><Sep />
          <Tool icon="cut" /><Tool icon="copy" /><Tool icon="paste" /><Tool icon="undo" /><Tool icon="redo" /><Sep $m={4} />
          <Tool icon="preview" /><Tool icon="page" /><Tool icon="print" /><Sep $m={3} /><Tool icon="findPkg" /><Tool icon="findDoc" w={24} /><Sep $m={4} />
          <Pick label="Technology" value="<default>" /><Sep $m={5} /><Tool icon="help" /><More gap={3} />
        </ToolBar>
        <ToolBar $pad={3}>
          <Grip /><Tool icon="newEl" w={26} /><Tool icon="shade" /><Tool icon="doc" /><Tool icon="letter" /><Tool icon="docNodes" /><Tool icon="legend" /><Sep $m={3} />
          <Tool icon="globe" /><Tool icon="dash" /><More gap={4} />
        </ToolBar>
        <ToolBar $pad={3}>
          <Grip /><Tool icon="layoutSave" w={26} /><Tool icon="props" /><Pick label="Perspective" value="Basic - Normal" />
          <More gap={7} />
        </ToolBar>
      </Toolbars>
      <Work>
        <Rail>
          <RailTab><Icon name="book" /><span>Learning Center</span></RailTab>
          <RailTab><Icon name="team" /><span>Team Review</span></RailTab>
        </Rail>
        <LeftDock />
        <DiagramView />
        <RightDock />
        <Rail $right>
          <RailTab $right><Icon name="views" /><span>Model Views</span></RailTab>
          <RailTab $right><Icon name="elBrowser" /><span>Element Browser</span></RailTab>
        </Rail>
      </Work>
      <StatusLine />
    </App_>
  );
}
